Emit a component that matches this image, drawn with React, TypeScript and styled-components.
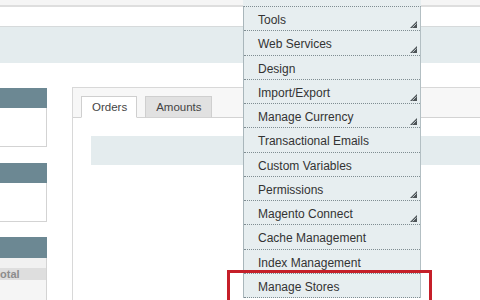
import React from 'react';
import styled, { createGlobalStyle } from 'styled-components';

// ============================================================================
// Data
// ============================================================================

interface MenuEntry {
  label: string;
  hasChildren?: boolean;
}

const MENU_ITEMS: MenuEntry[] = [
  { label: 'Tools', hasChildren: true },
  { label: 'Web Services', hasChildren: true },
  { label: 'Design' },
  { label: 'Import/Export', hasChildren: true },
  { label: 'Manage Currency', hasChildren: true },
  { label: 'Transactional Emails' },
  { label: 'Custom Variables' },
  { label: 'Permissions', hasChildren: true },
  { label: 'Magento Connect', hasChildren: true },
  { label: 'Cache Management' },
  { label: 'Index Management' },
  { label: 'Manage Stores' },
];

// ============================================================================
// Styled Components
// ============================================================================

const GlobalStyle = createGlobalStyle`
  html, body {
    margin: 0;
    padding: 0;
    background: #ffffff;
  }
  body {
    font-family: "Liberation Sans", Arial, Helvetica, sans-serif;
  }
`;

const Page = styled.div`
  position: relative;
  width: 480px;
  height: 300px;
  overflow: hidden;
  background: #ffffff;
`;

const TopStrip = styled.div`
  height: 5px;
  background: #f5f5f5;
  border-bottom: 2px solid #dedede;
`;

const WhiteBar = styled.div`
  height: 19px;
  border-bottom: 1px solid #d6dadb;
`;

const HeaderBand = styled.div`
  height: 36px;
  background: #e4ecee;
`;

const Main = styled.div`
  display: flex;
  gap: 25px;
  margin-top: 24px;
  height: 213px;
`;

const Sidebar = styled.div`
  width: 47px;
  flex-shrink: 0;
  display: flex;
  flex-direction: column;
  padding-top: 1px;
  overflow: hidden;
`;

const SideBox = styled.div<{ $gap: number }>`
  margin-bottom: ${p => p.$gap}px;
`;

const SideHeader = styled.div<{ $h?: number }>`
  height: ${p => p.$h ?? 20}px;
  background: #6c8893;
`;

const SideBody = styled.div`
  height: 38px;
  background: #ffffff;
  border-right: 1px solid #d3d3d3;
  border-bottom: 1px solid #d3d3d3;
`;

const TotalsBody = styled.div`
  flex: 1;
  display: flex;
  flex-direction: column;
  background: #f5f5f5;
  border-right: 1px solid #d3d3d3;
`;

const TotalsGap = styled.div`
  height: 10px;
  background: #f1f1f1;
`;

const TotalsRow = styled.div`
  height: 12px;
  background: #dedede;
  font-size: 11px;
  line-height: 12px;
  font-weight: bold;
  color: #8c8c8c;
  white-space: nowrap;
`;

const Panel = styled.div`
  flex: 1;
  border-top: 1px solid #d8d8d8;
  border-left: 1px solid #d8d8d8;
  display: flex;
  flex-direction: column;
`;

const TabStrip = styled.div`
  height: 30px;
  box-sizing: border-box;
  background: #f7f7f7;
  border-bottom: 1px solid #d3d3d3;
  display: flex;
  align-items: flex-end;
  gap: 8px;
  padding-left: 8px;
`;

const Tab = styled.div<{ $active?: boolean }>`
  height: 22px;
  box-sizing: border-box;
  padding: 0 9px 0 10px;
  margin-bottom: -1px;
  border: 1px solid #cfcfcf;
  border-bottom: ${p => (p.$active ? '1px solid #ffffff' : '1px solid #d3d3d3')};
  background: ${p => (p.$active ? '#ffffff' : '#e1e1e1')};
  color: #444444;
  font-size: 11.5px;
  line-height: 21px;
`;

const PanelContent = styled.div`
  flex: 1;
  background: #ffffff;
  padding: 18px 0 0 18px;
`;

const InfoBox = styled.div`
  height: 29px;
  background: #e4ecee;
`;

const Dropdown = styled.ul`
  position: absolute;
  top: 6px;
  left: 243px;
  width: 176px;
  margin: 0;
  padding: 0;
  list-style: none;
  background: #e7eef0;
  border-left: 1px solid #a9b6bb;
  border-right: 1px solid #b3bfc3;
  border-top: 1px dotted #7f8d92;
  box-shadow: 0 -6px 0 #e7eef0;
`;

const MenuItem = styled.li`
  position: relative;
  height: 23.25px;
  box-sizing: content-box;
  border-bottom: 1px dotted #7f8d92;
  padding-left: 14px;
  font-size: 12px;
  line-height: 14px;
  color: #333333;
  white-space: nowrap;
`;

const MenuLabel = styled.span`
  display: block;
  padding-top: 6px;
`;

const Arrow = styled.svg`
  position: absolute;
  right: 3px;
  bottom: 2px;
  width: 7px;
  height: 7px;
`;

const Highlight = styled.div`
  position: absolute;
  left: 227px;
  top: 270px;
  width: 205px;
  height: 60px;
  box-sizing: border-box;
  border: 3px solid #c51f29;
`;

// ============================================================================
// App
// ============================================================================

const SubmenuArrow: React.FC = () => (
  <Arrow viewBox="0 0 7 7">
    <polygon points="0,7 7,0 7,7" fill="#4d5356" />
    <line x1="2.5" y1="6.5" x2="6.5" y2="2.5" stroke="#b9c3c7" strokeWidth="1" />
  </Arrow>
);

const App: React.FC = () => (
  <Page>
    <GlobalStyle />
    <TopStrip />
    <WhiteBar />
    <HeaderBand />
    <Main>
      <Sidebar>
        <SideBox $gap={16}>
          <SideHeader />
          <SideBody />
        </SideBox>
        <SideBox $gap={15}>
          <SideHeader />
          <SideBody />
        </SideBox>
        <SideHeader $h={21} />
        <TotalsBody>
          <TotalsGap />
          <TotalsRow>otal</TotalsRow>
        </TotalsBody>
      </Sidebar>
      <Panel>
        <TabStrip>
          <Tab $active>Orders</Tab>
          <Tab>Amounts</Tab>
        </TabStrip>
        <PanelContent>
          <InfoBox />
        </PanelContent>
      </Panel>
    </Main>

    <Dropdown>
      {MENU_ITEMS.map(item => (
        <MenuItem key={item.label}>
          <MenuLabel>{item.label}</MenuLabel>
          {item.hasChildren && <SubmenuArrow />}
        </MenuItem>
      ))}
    </Dropdown>

    <Highlight />
  </Page>
);

export default App;
